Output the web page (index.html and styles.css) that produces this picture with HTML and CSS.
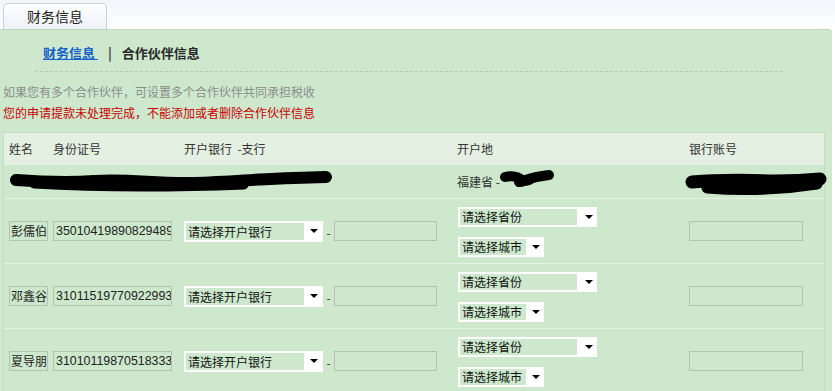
FILE: index.html
```html
<!DOCTYPE html>
<html lang="zh-CN">
<head>
<meta charset="utf-8">
<title>合作伙伴信息</title>
<link rel="stylesheet" href="styles.css">
</head>
<body>
<div class="topbar"><div class="tab">财务信息</div></div>
<div class="panel">
  <div class="crumbs">
    <a class="crumb-link" href="#">财务信息&nbsp;</a>
    <span class="sep">|</span>
    <span class="crumb-cur">合作伙伴信息</span>
  </div>
  <div class="dash"></div>
  <p class="hint">如果您有多个合作伙伴，可设置多个合作伙伴共同承担税收</p>
  <p class="warn">您的申请提款未处理完成，不能添加或者删除合作伙伴信息</p>

  <div class="grid">
    <div class="row head">
      <div class="c c1">姓名</div>
      <div class="c c2">身份证号</div>
      <div class="c c3">开户银行 &nbsp;-支行</div>
      <div class="c c4">开户地</div>
      <div class="c c5">银行账号</div>
    </div>

    <div class="row done">
      <div class="c c1 redact-cell">
        <svg class="scrib" width="330" height="30" viewBox="0 0 330 30"><path d="M12 14 C40 16 60 17 90 15 C130 13 150 18 190 17 C230 16 250 13 290 12 L322 11" fill="none" stroke="#000" stroke-width="12" stroke-linecap="round"/><path d="M30 18 C80 21 160 22 240 19" fill="none" stroke="#000" stroke-width="9" stroke-linecap="round"/></svg>
      </div>
      <div class="c c2"></div>
      <div class="c c3"></div>
      <div class="c c4">福建省 -<svg class="scrib-b" width="56" height="26" viewBox="0 0 56 26"><path d="M6 11 C14 9 20 11 24 15 C32 12 40 10 50 9" fill="none" stroke="#000" stroke-width="10" stroke-linecap="round"/><path d="M20 16 L30 14" fill="none" stroke="#000" stroke-width="10" stroke-linecap="round"/></svg></div>
      <div class="c c5"><svg class="scrib-c" width="142" height="30" viewBox="0 0 142 30"><path d="M7 12 C30 10 60 10 90 11 C110 11 125 10 135 9" fill="none" stroke="#000" stroke-width="13" stroke-linecap="round"/><path d="M22 18 C60 21 100 19 132 14" fill="none" stroke="#000" stroke-width="11" stroke-linecap="round"/></svg></div>
    </div>

    <div class="row item">
      <div class="c c1"><span class="box name">彭儒伯</span></div>
      <div class="c c2"><span class="box idno">350104198908294899</span></div>
      <div class="c c3">
        <span class="sel bank"><span class="sel-text">请选择开户银行</span><span class="arrow"></span></span>
        <span class="dashc">-</span>
        <span class="box branch"></span>
      </div>
      <div class="c c4 stack">
        <span class="sel prov"><span class="sel-text">请选择省份</span><span class="arrow"></span></span>
        <span class="sel city"><span class="sel-text">请选择城市</span><span class="arrow"></span></span>
      </div>
      <div class="c c5"><span class="box acct"></span></div>
    </div>

    <div class="row item">
      <div class="c c1"><span class="box name">邓鑫谷</span></div>
      <div class="c c2"><span class="box idno">310115197709229932</span></div>
      <div class="c c3">
        <span class="sel bank"><span class="sel-text">请选择开户银行</span><span class="arrow"></span></span>
        <span class="dashc">-</span>
        <span class="box branch"></span>
      </div>
      <div class="c c4 stack">
        <span class="sel prov"><span class="sel-text">请选择省份</span><span class="arrow"></span></span>
        <span class="sel city"><span class="sel-text">请选择城市</span><span class="arrow"></span></span>
      </div>
      <div class="c c5"><span class="box acct"></span></div>
    </div>

    <div class="row item">
      <div class="c c1"><span class="box name">夏导朋</span></div>
      <div class="c c2"><span class="box idno">310101198705183336</span></div>
      <div class="c c3">
        <span class="sel bank"><span class="sel-text">请选择开户银行</span><span class="arrow"></span></span>
        <span class="dashc">-</span>
        <span class="box branch"></span>
      </div>
      <div class="c c4 stack">
        <span class="sel prov"><span class="sel-text">请选择省份</span><span class="arrow"></span></span>
        <span class="sel city"><span class="sel-text">请选择城市</span><span class="arrow"></span></span>
      </div>
      <div class="c c5"><span class="box acct"></span></div>
    </div>
  </div>
</div>
</body>
</html>
```
FILE: styles.css
```css
html, body {
  margin: 0;
  padding: 0;
  background: #ffffff;
  font-family: "Noto Sans CJK SC", "Noto Sans", sans-serif;
  font-size: 12px;
  color: #333;
  overflow: hidden;
}

.topbar {
  height: 29px;
  background: linear-gradient(#f3f5fa, #ffffff);
  padding: 3px 0 0 3px;
  box-sizing: border-box;
  display: flex;
  align-items: flex-end;
}

.tab {
  width: 104px;
  height: 26px;
  box-sizing: border-box;
  border: 1px solid #c9ced8;
  border-bottom: none;
  border-radius: 5px 5px 0 0;
  background: linear-gradient(#ffffff, #f4f6fa 60%, #eef1f6);
  font-size: 14px;
  line-height: 25px;
  text-align: center;
  color: #222;
}

.panel {
  width: 832px;
  height: 362px;
  background: #cde8cd;
  border-top-right-radius: 4px;
  box-shadow: inset 0 1px 0 #bfd5c1;
  padding-top: 14px;
  box-sizing: border-box;
}

.crumbs {
  height: 20px;
  line-height: 20px;
  padding-left: 43px;
  font-size: 13px;
  font-weight: bold;
  display: flex;
  align-items: center;
}

.crumb-link {
  color: #1560c9;
  text-decoration: underline;
}

.sep {
  color: #444;
  margin: 0 10px 0 10px;
  font-weight: bold;
}

.crumb-cur {
  color: #2a2a2a;
}

.dash {
  margin: 8px 0 0 35px;
  width: 748px;
  border-top: 1px dashed #b3ccb4;
}

.hint {
  margin: 10px 0 0 3px;
  line-height: 20px;
  color: #8c8c8c;
}

.warn {
  margin: 0 0 0 3px;
  line-height: 22px;
  color: #cc0000;
}

.grid {
  margin: 8px 0 0 3px;
  width: 820px;
  border: 1px solid #c2dac6;
  border-bottom: none;
}

.row {
  display: grid;
  grid-template-columns: 45px 131px 273px 232px 137px;
  align-items: center;
}

.head {
  height: 32px;
  background: #e3f0e2;
}

.done {
  height: 33px;
}

.item {
  height: 64px;
  border-top: 1px solid #e6f3e6;
}

.c {
  padding-left: 4px;
  display: flex;
  align-items: center;
  white-space: nowrap;
  position: relative;
}

.c1 { padding-left: 5px; }

.head .c { line-height: 20px; }

.redact-cell { height: 100%; }

.scrib {
  position: absolute;
  left: 0;
  top: 1px;
}

.scrib-b {
  position: absolute;
  left: 46px;
  top: -7px;
}

.scrib-c {
  position: absolute;
  left: 0;
  top: -12px;
}

.box {
  display: inline-block;
  height: 20px;
  box-sizing: border-box;
  border: 1px solid #b0c4b2;
  background: #cde8cd;
  line-height: 18px;
  overflow: hidden;
  white-space: nowrap;
}

.name {
  width: 39px;
  padding-left: 1px;
  color: #222;
}

.idno {
  width: 119px;
  padding-left: 2px;
  font-family: "Liberation Sans", Arial, sans-serif;
  font-size: 12.4px;
  color: #222;
}

.branch { width: 103px; }

.acct { width: 114px; }

.dashc {
  width: 11px;
  text-align: center;
  color: #333;
  line-height: 20px;
  padding-top: 3px;
}

.sel {
  display: inline-flex;
  align-items: center;
  box-sizing: border-box;
  background: #ffffff;
  padding: 2px;
  height: 21px;
}

.sel-text {
  display: block;
  background: #cde8cd;
  height: 17px;
  line-height: 17px;
  padding-left: 2px;
  box-sizing: border-box;
  color: #111;
  font-size: 12px;
}

.arrow {
  width: 0;
  height: 0;
  border-left: 4px solid transparent;
  border-right: 4px solid transparent;
  border-top: 4px solid #000;
}

.bank { width: 139px; }
.bank .sel-text { width: 118px; }
.bank .arrow { margin-left: 6px; }

.stack {
  flex-direction: column;
  align-items: flex-start;
  gap: 10px;
  padding-left: 5px;
  padding-top: 1px;
}

.prov { width: 139px; height: 20px; }
.prov .sel-text { width: 117px; height: 16px; line-height: 16px; }
.prov .arrow { margin-left: 8px; }

.city { width: 86px; height: 20px; }
.city .sel-text { width: 66px; height: 16px; line-height: 16px; padding-left: 2px; }
.city .arrow { margin-left: 6px; }
```
